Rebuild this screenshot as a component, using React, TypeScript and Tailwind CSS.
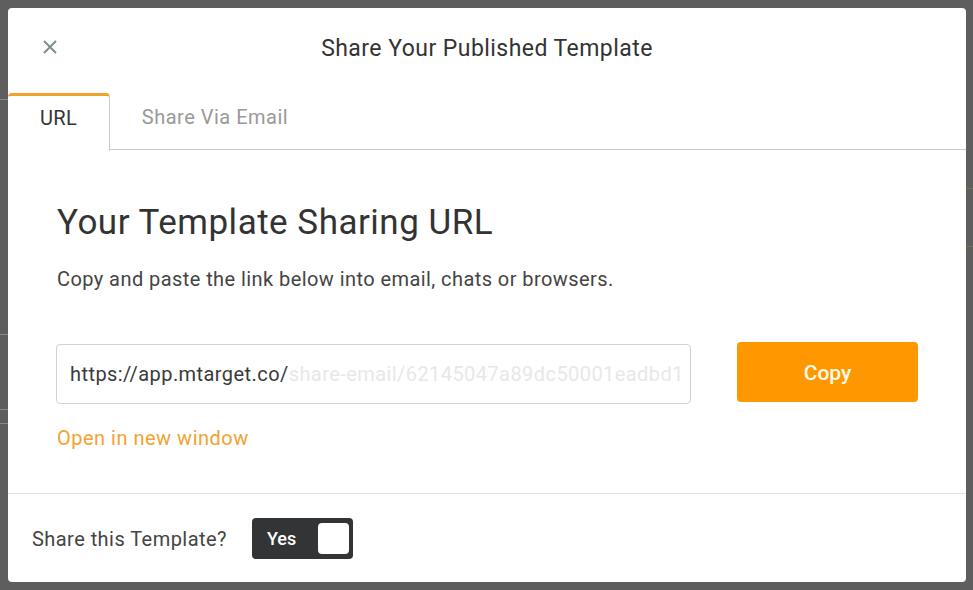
import React, { useState } from 'react';

const App: React.FC = () => {
  const [tab, setTab] = useState<'url' | 'email'>('url');
  const [shared, setShared] = useState(true);

  return (
    <div className="relative w-[973px] h-[590px] overflow-hidden bg-[#5e5e5e] font-['Roboto',sans-serif]">
      {/* page behind the backdrop */}
      <div className="absolute left-0 top-[99px] w-[8px] h-px bg-[#8a8a8a]" />
      <div className="absolute left-0 top-[334px] w-[8px] h-px bg-[#8a8a8a]" />
      <div className="absolute left-0 top-[409px] w-[8px] h-px bg-[#8a8a8a]" />
      <div className="absolute left-0 top-[423px] w-[8px] h-px bg-[#8a8a8a]" />
      <div className="absolute right-0 top-[188px] w-[7px] h-px bg-[#7a6a50]" />
      <div className="absolute right-0 top-[246px] w-[7px] h-px bg-[#7a6a50]" />

      <div className="pl-[8px] pt-[8px]">
        <div className="relative w-[958px] h-[574px] bg-white rounded-[4px] flex flex-col">
          {/* header */}
          <div className="relative h-[85px] flex items-center justify-center">
            <button className="absolute left-[35px] top-[32px] w-[14px] h-[14px] text-[#7b8a8a]">
              <svg viewBox="0 0 14 14" width="14" height="14" fill="none" stroke="currentColor" strokeWidth="1.8">
                <path d="M1 1 L13 13 M13 1 L1 13" />
              </svg>
            </button>
            <h2 className="text-[23px] leading-[28px] tracking-[0.45px] text-[#333] mt-[-4px]">Share Your Published Template</h2>
          </div>

          {/* tabs */}
          <div className="flex h-[57px] border-b border-[#c9cccc]">
            <button
              onClick={() => setTab('url')}
              className={`w-[102px] h-[57px] pb-[12px] text-[20px] tracking-[0.3px] rounded-tl-[4px] rounded-tr-[4px] border-t-[3px] border-r ${
                tab === 'url'
                  ? 'border-t-[#f0a32c] border-r-[#c9cccc] bg-white text-[#333] mb-[-1px] h-[58px]'
                  : 'border-t-transparent border-r-transparent text-[#999]'
              }`}
            >
              URL
            </button>
            <button
              onClick={() => setTab('email')}
              className={`w-[210px] h-[57px] pb-[12px] text-[20px] tracking-[0.5px] border-t-[3px] ${
                tab === 'email' ? 'border-t-[#f0a32c] text-[#333]' : 'border-t-transparent text-[#999]'
              }`}
            >
              Share Via Email
            </button>
          </div>

          {/* body */}
          <div className="flex-1 px-[48px] pt-[53px]">
            <h1 className="ml-px text-[35px] leading-[40px] tracking-[0.5px] text-[#333]">Your Template Sharing URL</h1>
            <p className="ml-px mt-[22px] text-[20px] leading-[28px] tracking-[0.43px] text-[#444]">
              Copy and paste the link below into email, chats or browsers.
            </p>

            <div className="flex items-start gap-[46px] mt-[49px]">
              <div className="mt-[2px] flex-1 h-[60px] border border-[#cfd3d3] rounded-[4px] flex items-center pl-[13px] overflow-hidden whitespace-nowrap text-[20px] tracking-[0.43px]">
                <span className="text-[#3a3a3a]">https://app.mtarget.co/</span>
                <span className="text-[#e8e8e8]">share-email/62145047a89dc50001eadbd1</span>
              </div>
              <button className="w-[181px] h-[60px] pt-[3px] rounded-[4px] bg-[#ff9800] text-[#fffbea] text-[21px] font-medium">
                Copy
              </button>
            </div>

            <a className="inline-block ml-px mt-[20px] text-[20px] leading-[28px] tracking-[0.5px] text-[#f2a230] cursor-pointer">
              Open in new window
            </a>
          </div>

          {/* footer */}
          <div className="h-[89px] border-t border-[#e2e2e2] flex items-center pl-[24px] gap-[25px]">
            <span className="text-[20px] tracking-[0.45px] text-[#444] mt-[1px]">Share this Template?</span>
            <button
              onClick={() => setShared(!shared)}
              className="w-[101px] h-[41px] rounded-[4px] bg-[#333435] flex items-center justify-between pl-[15px] pr-[4px]"
            >
              <span className="text-white text-[18px] font-medium">{shared ? 'Yes' : 'No'}</span>
              <span className="w-[31px] h-[31px] rounded-[4px] bg-white" />
            </button>
          </div>
        </div>
      </div>
    </div>
  );
};

export default App;
